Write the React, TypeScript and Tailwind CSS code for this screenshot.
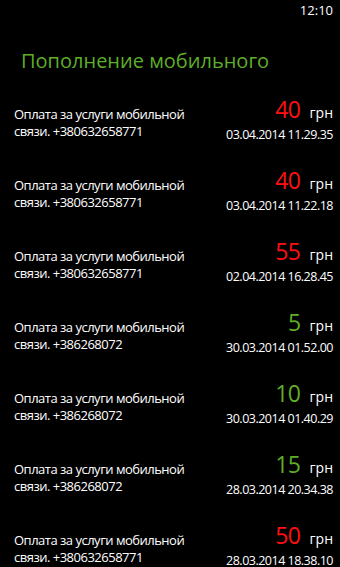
const payments = [
  { amount: 40, phone: '+380632658771', date: '03.04.2014 11.29.35' },
  { amount: 40, phone: '+380632658771', date: '03.04.2014 11.22.18' },
  { amount: 55, phone: '+380632658771', date: '02.04.2014 16.28.45' },
  { amount: 5, phone: '+386268072', date: '30.03.2014 01.52.00' },
  { amount: 10, phone: '+386268072', date: '30.03.2014 01.40.29' },
  { amount: 15, phone: '+386268072', date: '28.03.2014 20.34.38' },
  { amount: 50, phone: '+380632658771', date: '28.03.2014 18.38.10' },
];

// green for small top-ups, red for big ones
const amountColor = (amount: number) => (amount >= 40 ? 'text-[#ff1010]' : 'text-[#5fae28]');

const App = () => {
  return (
    <div className="w-[340px] h-[567px] bg-black text-white overflow-hidden whitespace-nowrap font-['Open_Sans','Noto_Sans',sans-serif]">
      <div className="h-[22px] flex items-center justify-end pr-[7px] text-[13px]">12:10</div>

      <h1 className="mt-[25px] pl-[21px] text-[20px] leading-[28px] text-[#5fae28] font-normal">
        Пополнение мобильного
      </h1>

      <div className="mt-[20px] flex flex-col">
        {payments.map((p, i) => (
          <div key={i} className="h-[71px] shrink-0 flex justify-between items-start pl-[14px] pr-[7px]">
            <div className="mt-[10.5px] text-[13px] leading-[17px] tracking-[-0.5px]">
              <div>Оплата за услуги мобильной</div>
              <div>связи. {p.phone}</div>
            </div>
            <div className="mt-[1px] flex flex-col items-end">
              <div className="flex items-baseline gap-[9px] leading-[26px]">
                <span className={`text-[23px] tracking-[-0.5px] ${amountColor(p.amount)}`}>{p.amount}</span>
                <span className="text-[14px]">грн</span>
              </div>
              <div className="text-[12.5px] leading-[17px] tracking-[-0.5px]">{p.date}</div>
            </div>
          </div>
        ))}
      </div>
    </div>
  );
};

export default App;
